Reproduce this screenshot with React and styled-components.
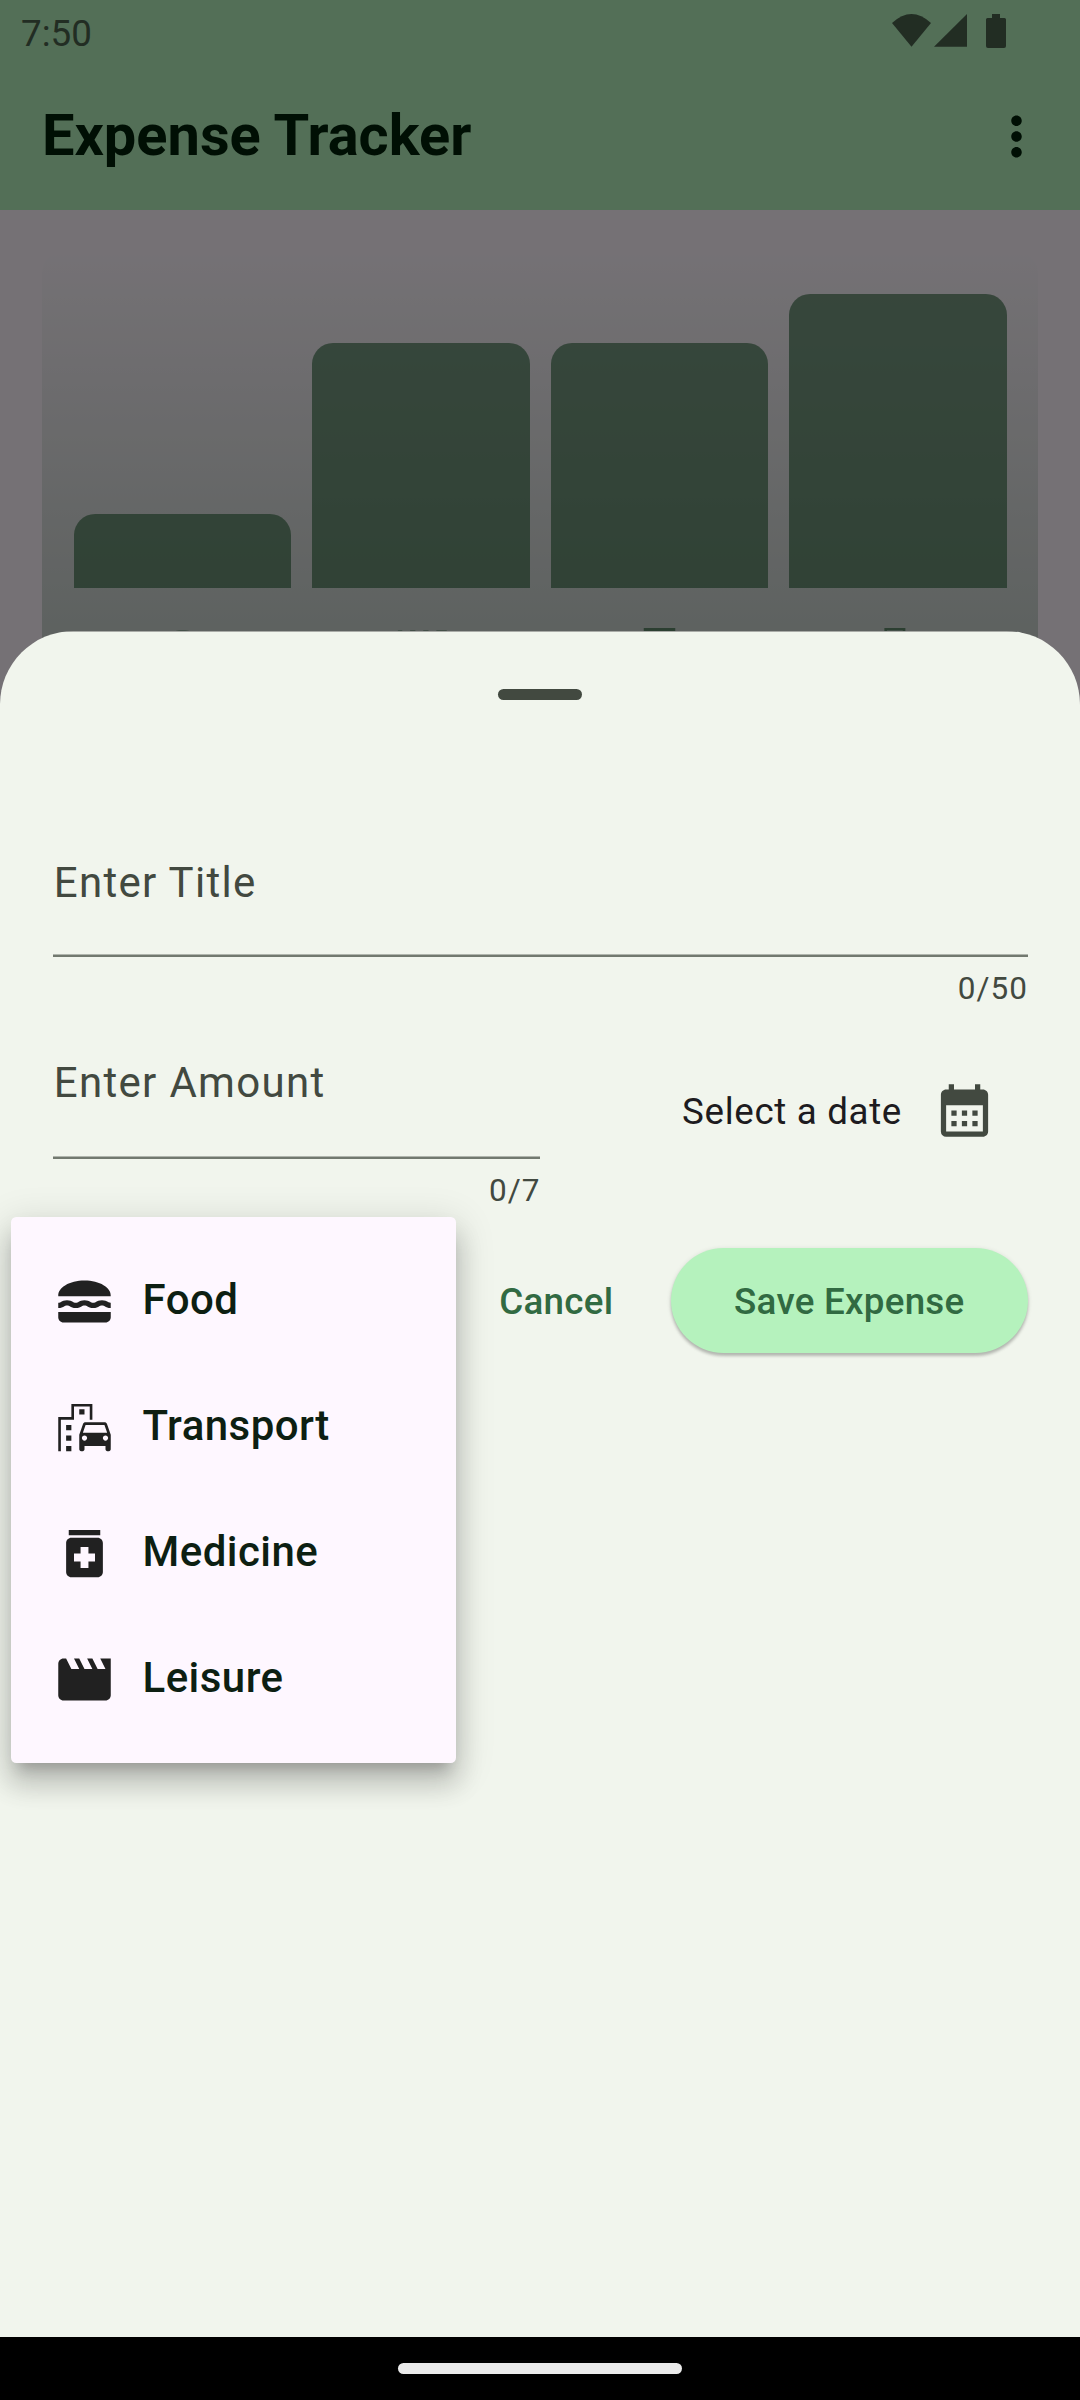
import React from "react";
import styled, { createGlobalStyle } from "styled-components";
import {
  MdLunchDining,
  MdEmojiTransportation,
  MdMedication,
  MdMovie,
  MdCalendarMonth,
  MdMoreVert,
} from "react-icons/md";

const GlobalStyle = createGlobalStyle`
  * { box-sizing: border-box; }
  body {
    margin: 0;
    background: #000;
    font-family: Roboto, "Noto Sans", sans-serif;
  }
`;

const Screen = styled.div`
  position: relative;
  display: flex;
  flex-direction: column;
  width: 1080px;
  height: 2400px;
  overflow: hidden;
`;

const Page = styled.main`
  flex: 1;
  min-height: 0;
  background: #fef7ff;
`;

const StatusBar = styled.div`
  display: flex;
  align-items: center;
  justify-content: space-between;
  height: 63px;
  padding: 4px 74px 0 21px;
  background: #b5f1bd;
  color: #4a624e;
`;

const Clock = styled.span`
  font-size: 36.75px;
  line-height: 43px;
`;

const StatusIcons = styled.svg`
  display: block;
  width: 114px;
  height: 34px;
  margin-bottom: 5px;
  fill: currentColor;
`;

const AppBar = styled.header`
  display: flex;
  align-items: center;
  justify-content: space-between;
  height: 147px;
  padding: 0 32px 0 42px;
  background: #b5f1bd;
  color: #002109;
`;

const AppTitle = styled.h1`
  margin: 0;
  padding-bottom: 4px;
  font-size: 57.75px;
  font-weight: 700;
  line-height: 74px;
`;

const MenuButton = styled.button`
  display: flex;
  padding: 0;
  border: 0;
  background: none;
  color: inherit;
  font-size: 63px;
`;

const Chart = styled.section`
  display: flex;
  flex-direction: column;
  gap: 31.5px;
  height: 472px;
  margin: 42px;
  padding: 42px 21px;
  border-radius: 21px;
  background: linear-gradient(to top, rgba(50, 106, 66, 0.3), rgba(50, 106, 66, 0));
`;

const Bars = styled.div`
  display: flex;
  align-items: flex-end;
  height: 294px;
`;

const BarSlot = styled.div`
  display: flex;
  flex: 1;
  align-items: flex-end;
  height: 100%;
  padding: 0 10.5px;
`;

const Bar = styled.div`
  width: 100%;
  border-radius: 21px 21px 0 0;
  background: rgba(50, 106, 66, 0.65);
`;

const BarIcons = styled.div`
  display: flex;
`;

const BarIcon = styled.div`
  display: flex;
  flex: 1;
  justify-content: center;
  color: rgba(50, 106, 66, 0.7);
  font-size: 63px;
`;

const Scrim = styled.div`
  position: absolute;
  inset: 0;
  background: rgba(0, 0, 0, 0.54);
`;

const Sheet = styled.section`
  position: absolute;
  top: 631px;
  right: 0;
  bottom: 63px;
  left: 0;
  border-radius: 73.5px 73.5px 0 0;
  background: linear-gradient(#a9aba7 1px, #f1f5ed 1px);
`;

const HandleArea = styled.div`
  display: flex;
  align-items: center;
  justify-content: center;
  height: 126px;
`;

const Handle = styled.div`
  width: 84px;
  height: 11px;
  border-radius: 5.5px;
  background: #424940;
`;

const Form = styled.form`
  display: flex;
  flex-direction: column;
  padding: 94px 52.5px 0;
`;

const Field = styled.div`
  display: flex;
  flex-direction: column;
  width: ${(p) => p.$width || "auto"};
`;

const Label = styled.label`
  padding-left: 1.3px;
  color: #424940;
  font-size: 42px;
  line-height: 63px;
  letter-spacing: 1.3125px;
`;

const Underline = styled.div`
  height: 3px;
  margin-top: ${(p) => p.$gap};
  background: linear-gradient(#b0b5ad 1px, #72796f 1px);
`;

const Counter = styled.div`
  margin: 11px -0.5px -1px 0;
  color: #424940;
  font-size: 31.5px;
  line-height: 42px;
  letter-spacing: 1.05px;
  text-align: right;
`;

const AmountRow = styled.div`
  display: flex;
  justify-content: space-between;
  margin-top: 42px;
`;

const DatePicker = styled.div`
  display: flex;
  align-items: center;
  gap: 31px;
  height: 119px;
  padding-right: 31.5px;
  color: #1d1b20;
  font-size: 36.75px;
  line-height: 52.5px;
  letter-spacing: 0.656px;
`;

const DateText = styled.span`
  padding-top: 3px;
`;

const DateButton = styled.button`
  display: flex;
  padding: 0;
  border: 0;
  background: none;
  color: #424940;
  font-size: 63px;
`;

const Actions = styled.div`
  display: flex;
  justify-content: flex-end;
  gap: 26.25px;
  margin-top: 37px;
`;

const ActionButton = styled.button`
  height: 105px;
  padding: 2px ${(p) => (p.$filled ? "63px" : "31.5px")} 0;
  border: 0;
  border-radius: 52.5px;
  background: ${(p) => (p.$filled ? "#b5f2bd" : "transparent")};
  box-shadow: ${(p) =>
    p.$filled
      ? "0 3px 3px rgba(0,0,0,.2), 0 1px 5px rgba(0,0,0,.12)"
      : "none"};
  color: #316a42;
  font-family: inherit;
  font-size: 36.75px;
  font-weight: 500;
  letter-spacing: 0.2625px;
`;

const Menu = styled.ul`
  position: absolute;
  top: 1217px;
  left: 11px;
  width: 445px;
  height: 546px;
  margin: 0;
  padding: 21px 0;
  border-radius: 5.25px;
  background: #fef7ff;
  box-shadow:
    0 13px 13px -8px rgba(0, 0, 0, 0.2),
    0 21px 26px 3px rgba(0, 0, 0, 0.14),
    0 8px 37px 5px rgba(0, 0, 0, 0.12);
  list-style: none;
`;

const MenuItem = styled.li`
  display: flex;
  align-items: center;
  gap: 26.5px;
  height: 126px;
  padding-left: 42px;
  color: #0d1f12;
  font-size: 42px;
  font-weight: 500;
  letter-spacing: 0.46px;

  svg {
    color: #212121;
    font-size: 63px;
  }

  span {
    line-height: 60px;
    padding-bottom: 2px;
  }
`;

const NavBar = styled.footer`
  display: flex;
  justify-content: center;
  height: 63px;
  padding-top: 26px;
  position: relative;
  background: #000;
`;

const NavPill = styled.div`
  width: 284px;
  height: 11px;
  border-radius: 5.5px;
  background: #ebebeb;
`;

const spending = [
  { id: "food", amount: 74, Icon: MdLunchDining },
  { id: "leisure", amount: 245, Icon: MdMovie },
  { id: "medicine", amount: 245, Icon: MdMedication },
  { id: "transport", amount: 294, Icon: MdEmojiTransportation },
];

const categories = [
  { label: "Food", Icon: MdLunchDining },
  { label: "Transport", Icon: MdEmojiTransportation },
  { label: "Medicine", Icon: MdMedication },
  { label: "Leisure", Icon: MdMovie },
];

export default function App() {
  return (
    <>
      <GlobalStyle />
      <Screen>
        <Page>
          <StatusBar>
            <Clock>7:50</Clock>
            <StatusIcons viewBox="0 0 114 34">
              <path d="M0 9Q19.500 -9 39 9L19.500 32.700Z" />
              <path d="M42 32.700L75 0V32.700Z" />
              <path d="M100 0h8v4h4.500a1.500 1.500 0 0 1 1.500 1.500V32a2 2 0 0 1-2 2H96a2 2 0 0 1-2-2V5.500A1.500 1.500 0 0 1 95.500 4H100Z" />
            </StatusIcons>
          </StatusBar>
          <AppBar>
            <AppTitle>Expense Tracker</AppTitle>
            <MenuButton type="button">
              <MdMoreVert />
            </MenuButton>
          </AppBar>
          <Chart>
            <Bars>
              {spending.map(({ id, amount }) => (
                <BarSlot key={id}>
                  <Bar style={{ height: amount }} />
                </BarSlot>
              ))}
            </Bars>
            <BarIcons>
              {spending.map(({ id, Icon }) => (
                <BarIcon key={id}>
                  <Icon />
                </BarIcon>
              ))}
            </BarIcons>
          </Chart>
        </Page>
        <Scrim />
        <Sheet>
          <HandleArea>
            <Handle />
          </HandleArea>
          <Form>
            <Field>
              <Label>Enter Title</Label>
              <Underline $gap="40px" />
              <Counter>0/50</Counter>
            </Field>
            <AmountRow>
              <Field $width="487.5px">
                <Label>Enter Amount</Label>
                <Underline $gap="42px" />
                <Counter>0/7</Counter>
              </Field>
              <DatePicker>
                <DateText>Select a date</DateText>
                <DateButton type="button">
                  <MdCalendarMonth />
                </DateButton>
              </DatePicker>
            </AmountRow>
            <Actions>
              <ActionButton type="button">Cancel</ActionButton>
              <ActionButton type="button" $filled>
                Save Expense
              </ActionButton>
            </Actions>
          </Form>
        </Sheet>
        <Menu>
          {categories.map(({ label, Icon }) => (
            <MenuItem key={label}>
              <Icon />
              <span>{label}</span>
            </MenuItem>
          ))}
        </Menu>
        <NavBar>
          <NavPill />
        </NavBar>
      </Screen>
    </>
  );
}
